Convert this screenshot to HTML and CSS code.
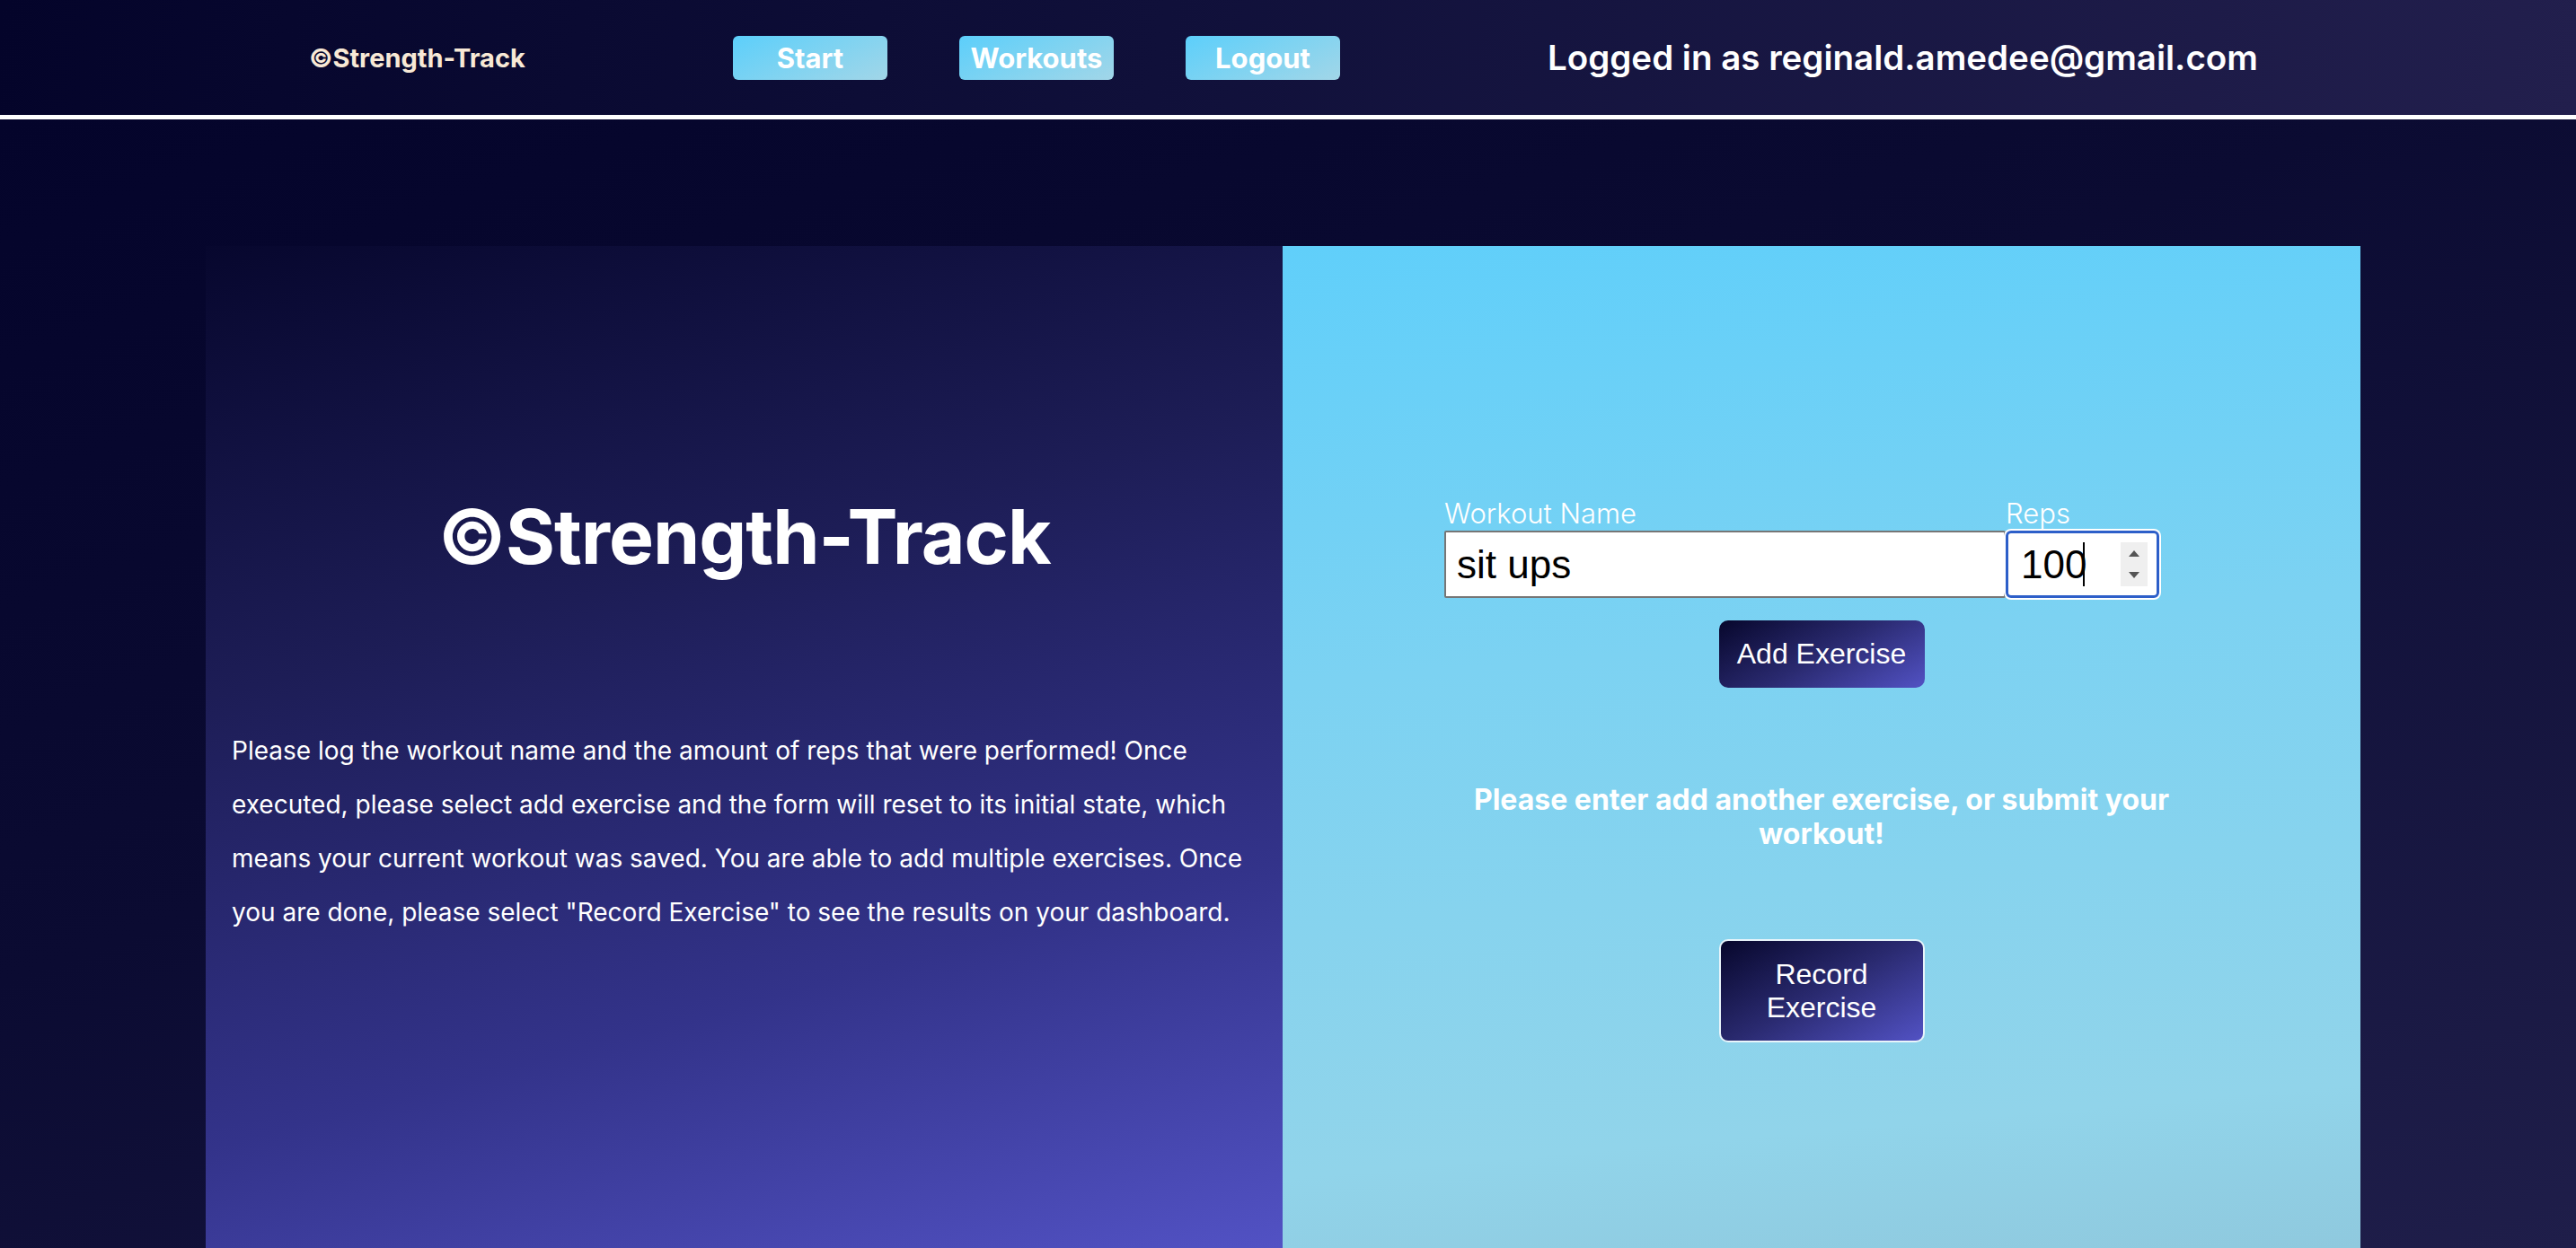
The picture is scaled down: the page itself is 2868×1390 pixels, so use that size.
FILE: index.html
```html
<!DOCTYPE html>
<html lang="en">
<head>
<meta charset="utf-8">
<title>Strength-Track</title>
<link rel="stylesheet" href="styles.css">
</head>
<body>
<header class="topbar">
  <div class="brand">©Strength-Track</div>
  <nav class="nav">
    <a class="nav-btn" href="#">Start</a>
    <a class="nav-btn" href="#">Workouts</a>
    <a class="nav-btn" href="#">Logout</a>
  </nav>
  <div class="user">Logged in as reginald.amedee@gmail.com</div>
</header>
<main class="main">
  <section class="card">
    <div class="panel panel-left">
      <h1 class="title">©Strength-Track</h1>
      <p class="intro">Please log the workout name and the amount of reps that were performed! Once executed, please select add exercise and the form will reset to its initial state, which means your current workout was saved. You are able to add multiple exercises. Once you are done, please select "Record Exercise" to see the results on your dashboard.</p>
    </div>
    <div class="panel panel-right">
      <form class="entry">
        <div class="field field-name">
          <label class="label" for="wname">Workout Name</label>
          <input class="input input-name" id="wname" type="text" value="sit ups">
        </div>
        <div class="field field-reps">
          <label class="label" for="reps">Reps</label>
          <div class="reps-box">
            <input class="input input-reps" id="reps" type="text" value="100">
            <span class="caret"></span>
            <span class="spinner">
              <svg width="30" height="49" viewBox="0 0 30 49"><rect width="30" height="49" fill="#efefef"/><path d="M9 16 L15 9 L21 16 Z" fill="#555"/><path d="M9 33 L15 40 L21 33 Z" fill="#555"/></svg>
            </span>
          </div>
        </div>
      </form>
      <button class="action action-add" type="button">Add Exercise</button>
      <p class="notice">Please enter add another exercise, or submit your workout!</p>
      <button class="action action-record" type="button">Record Exercise</button>
    </div>
  </section>
</main>
</body>
</html>
```
FILE: styles.css
```css
* { box-sizing: border-box; }
html, body { margin: 0; padding: 0; }
body {
  width: 2868px;
  height: 1390px;
  overflow: hidden;
  background: linear-gradient(160deg, #03032a 0%, #0b0b32 45%, #1f1e4a 100%);
  font-family: Inter, "Noto Sans", sans-serif;
  color: #fff;
}
.topbar {
  height: 133px;
  border-bottom: 5px solid #ffffff;
  background: linear-gradient(100deg, #04042a 0%, #10103a 45%, #221f4d 100%);
  display: flex;
  align-items: center;
  padding-left: 344px;
}
.brand {
  font-size: 29px;
  font-weight: 700;
  color: #f8e9d6;
  width: 472px;
  white-space: nowrap;
}
.nav { display: flex; gap: 80px; width: 907px; }
.nav-btn {
  width: 172px;
  height: 49px;
  border-radius: 6px;
  background: linear-gradient(155deg, #5ccffb 0%, #7fd3f1 50%, #a2d6e8 100%);
  color: #fff;
  font-size: 31px;
  font-weight: 700;
  text-decoration: none;
  display: flex;
  align-items: center;
  justify-content: center;
}
.user {
  font-size: 38.5px;
  font-weight: 600;
  color: #fff;
  white-space: nowrap;
}
.main { padding-top: 141px; padding-left: 229px; }
.card {
  display: grid;
  grid-template-columns: 1199px 1200px;
  height: 1116px;
}
.panel { height: 1116px; }
.panel-left {
  background: linear-gradient(165deg, #07072e 0%, #1d1d56 35%, #33338a 70%, #5252c4 100%);
  padding: 0 29px;
  display: flex;
  flex-direction: column;
  align-items: center;
}
.title {
  margin: 273px 0 0 0;
  font-size: 84px;
  font-weight: 700;
  line-height: 101px;
  letter-spacing: -1px;
  white-space: nowrap;
}
.intro {
  margin: 158px 0 0 0;
  align-self: stretch;
  font-size: 28px;
  line-height: 60px;
  font-weight: 400;
}
.panel-right {
  background: linear-gradient(175deg, #60cffa 0%, #7cd2f2 40%, #91d4ea 85%, #8fc9de 100%);
  display: flex;
  flex-direction: column;
  align-items: center;
}
.entry {
  align-self: flex-start;
  margin: 278px 0 0 180px;
  display: flex;
}
.field { display: flex; flex-direction: column; }
.label {
  font-size: 31px;
  font-weight: 300;
  line-height: 39px;
  color: #fff;
}
.input {
  height: 75px;
  font-family: "Liberation Sans", Arial, sans-serif;
  font-size: 44px;
  color: #000;
  background: #fff;
  outline: none;
}
.input-name {
  width: 625px;
  border: 2px solid #767676;
  border-radius: 2px;
  padding: 0 12px;
}
.reps-box { position: relative; }
.input-reps {
  width: 171px;
  border: 3px solid #2d5fc9;
  border-radius: 6px;
  box-shadow: 0 0 0 2px #ffffff;
  padding: 0 14px;
}
.caret {
  position: absolute;
  left: 86px;
  top: 13px;
  width: 2px;
  height: 49px;
  background: #000;
}
.spinner {
  position: absolute;
  left: 128px;
  top: 13px;
  width: 30px;
  height: 49px;
  display: block;
}
.spinner svg { display: block; }
.action {
  width: 229px;
  font-family: "Liberation Sans", Arial, sans-serif;
  font-size: 32px;
  line-height: 37px;
  color: #fff;
  background: linear-gradient(150deg, #07072c 0%, #2a2a70 50%, #5252c4 100%);
  border-radius: 10px;
  cursor: pointer;
}
.action-add {
  margin-top: 25px;
  height: 75px;
  border: none;
  padding: 0 10px;
}
.action-record {
  margin-top: 98px;
  height: 115px;
  border: 2px solid #e8f4fa;
  padding: 0 20px;
}
.notice {
  margin: 106px 0 0 0;
  width: 820px;
  text-align: center;
  font-size: 32px;
  font-weight: 700;
  line-height: 38px;
}
```
